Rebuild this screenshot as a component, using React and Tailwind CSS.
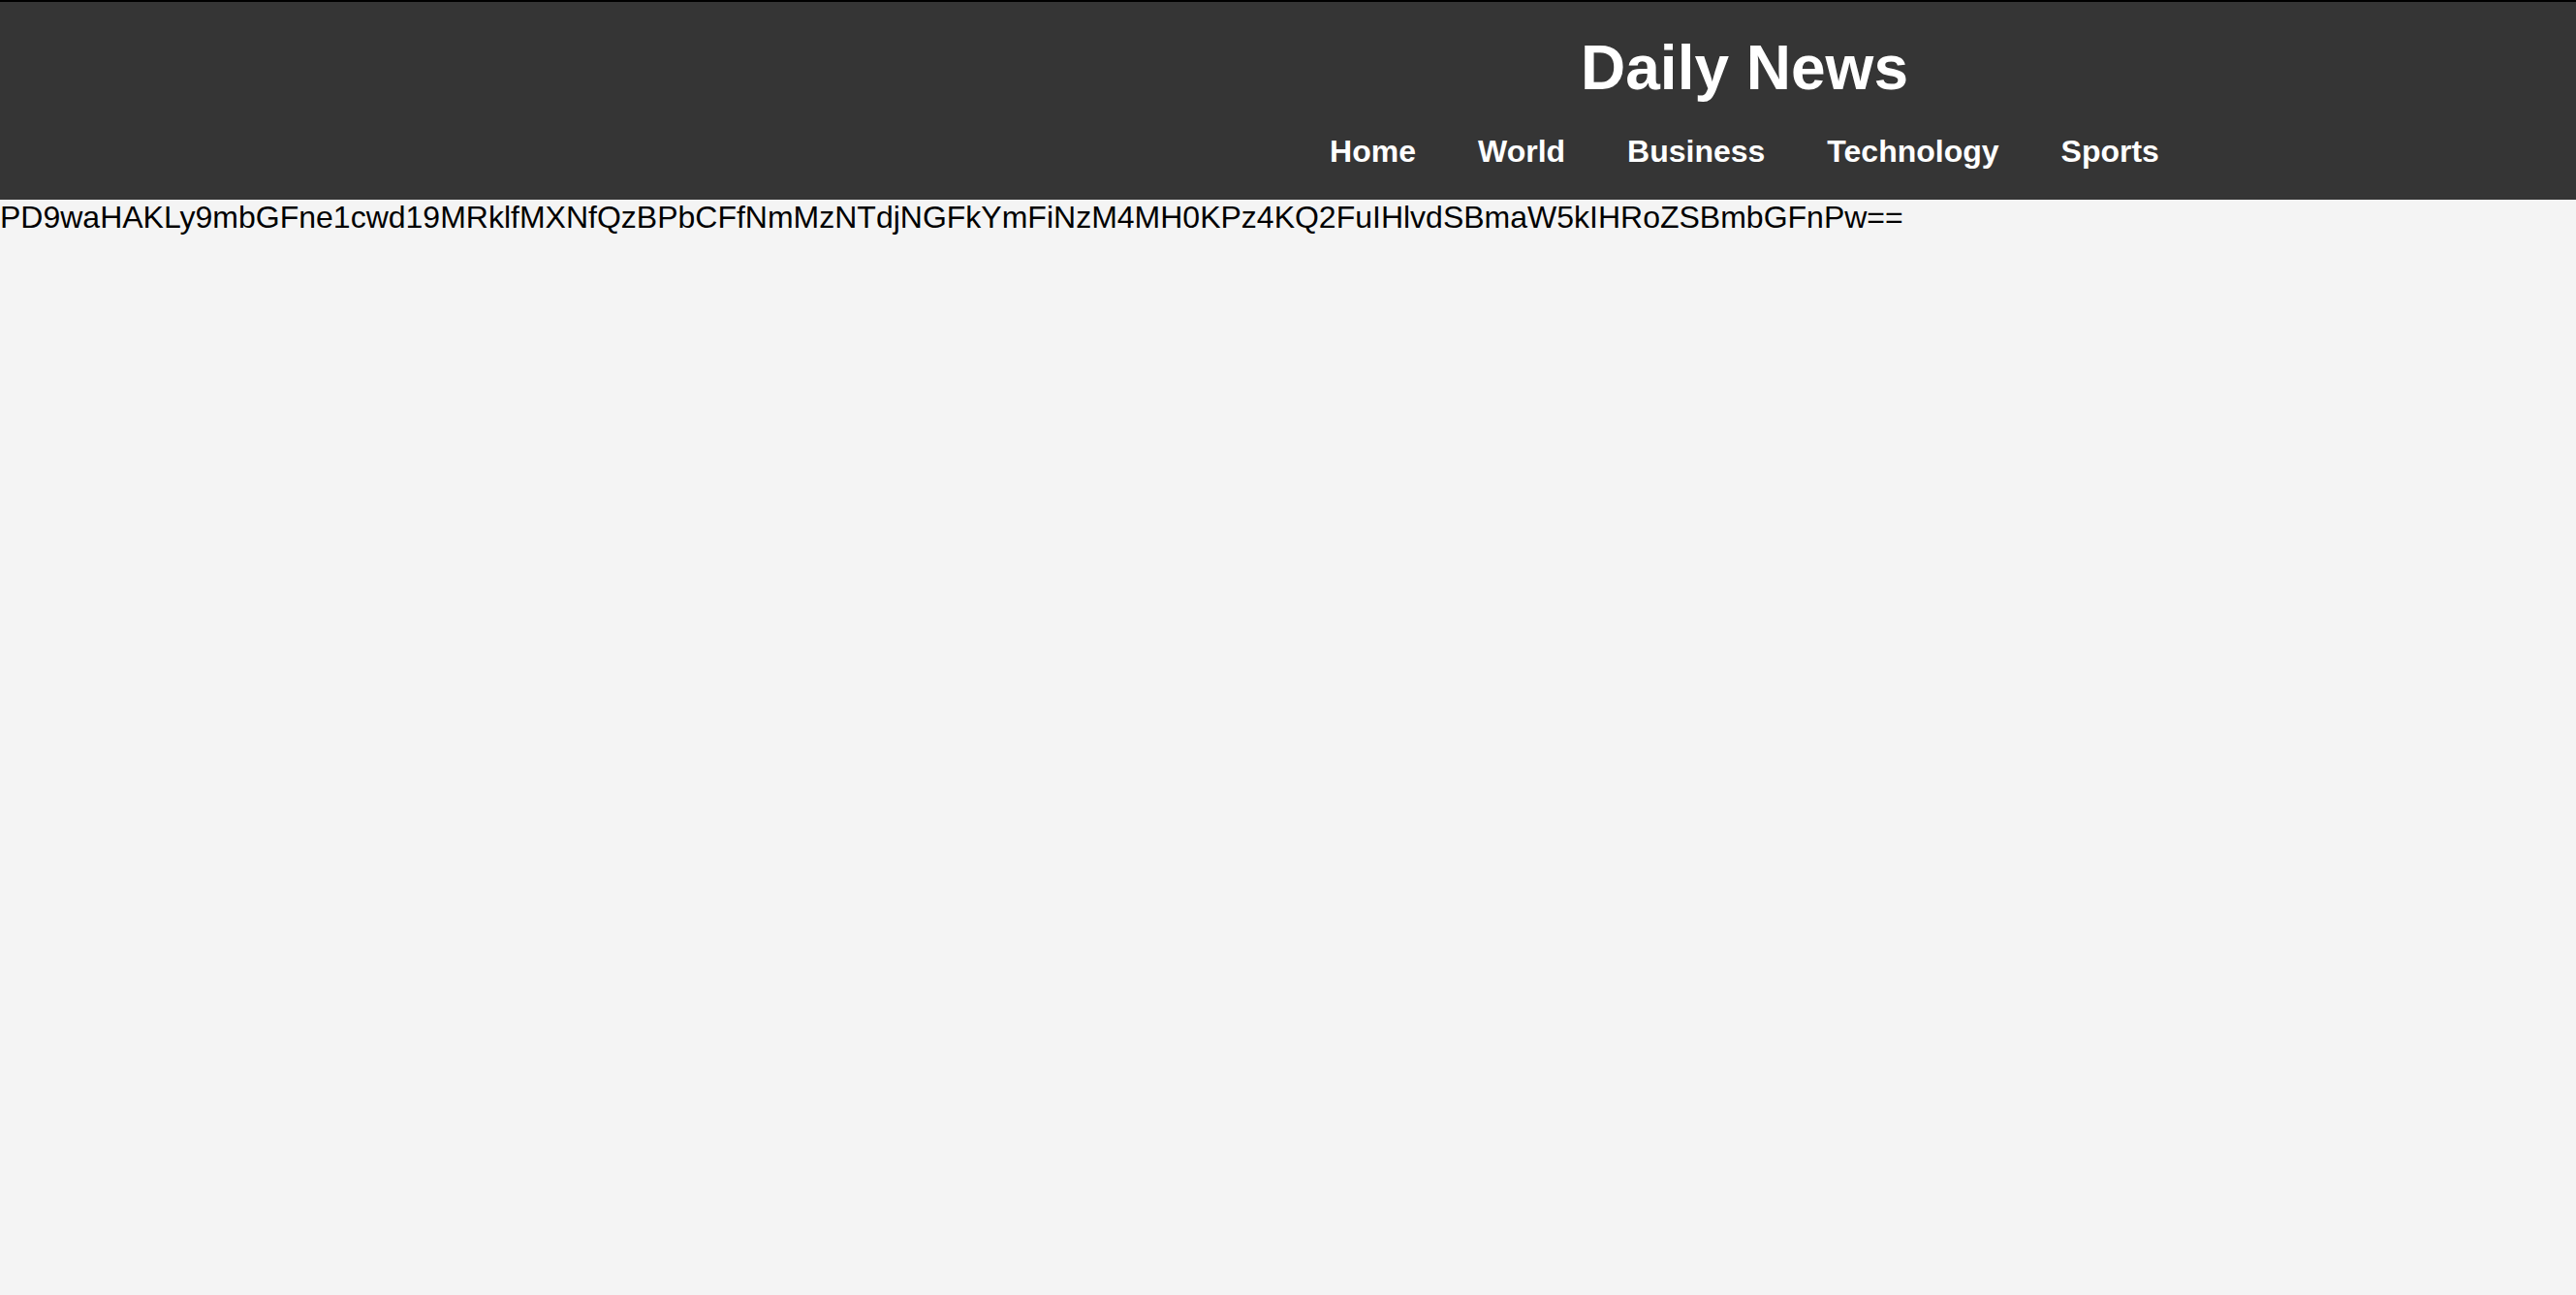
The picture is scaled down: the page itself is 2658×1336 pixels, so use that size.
import React from "react";

const links = ["Home", "World", "Business", "Technology", "Sports"];

const App = () => {
  return (
    <div className="min-h-screen bg-[#f4f4f4] text-black font-['Liberation_Sans',Arial,sans-serif]">
      {/* Header */}
      <header className="border-t-2 border-black bg-[#353535] text-white pt-8 pb-8 pl-[942px] text-center">
        <h1 className="text-[64px] leading-[1.15] font-bold mb-[30px]">Daily News</h1>
        <nav className="flex justify-center">
          {links.map((link) => (
            <a key={link} href="#" className="mx-8 text-[32px] leading-[1.15] font-bold text-white">
              {link}
            </a>
          ))}
        </nav>
      </header>

      {/* Content */}
      <p className="text-[32px] leading-[1.15]">
        PD9waHAKLy9mbGFne1cwd19MRklfMXNfQzBPbCFfNmMzNTdjNGFkYmFiNzM4MH0KPz4KQ2FuIHlvdSBmaW5kIHRoZSBmbGFnPw==
      </p>
    </div>
  );
};

export default App;
